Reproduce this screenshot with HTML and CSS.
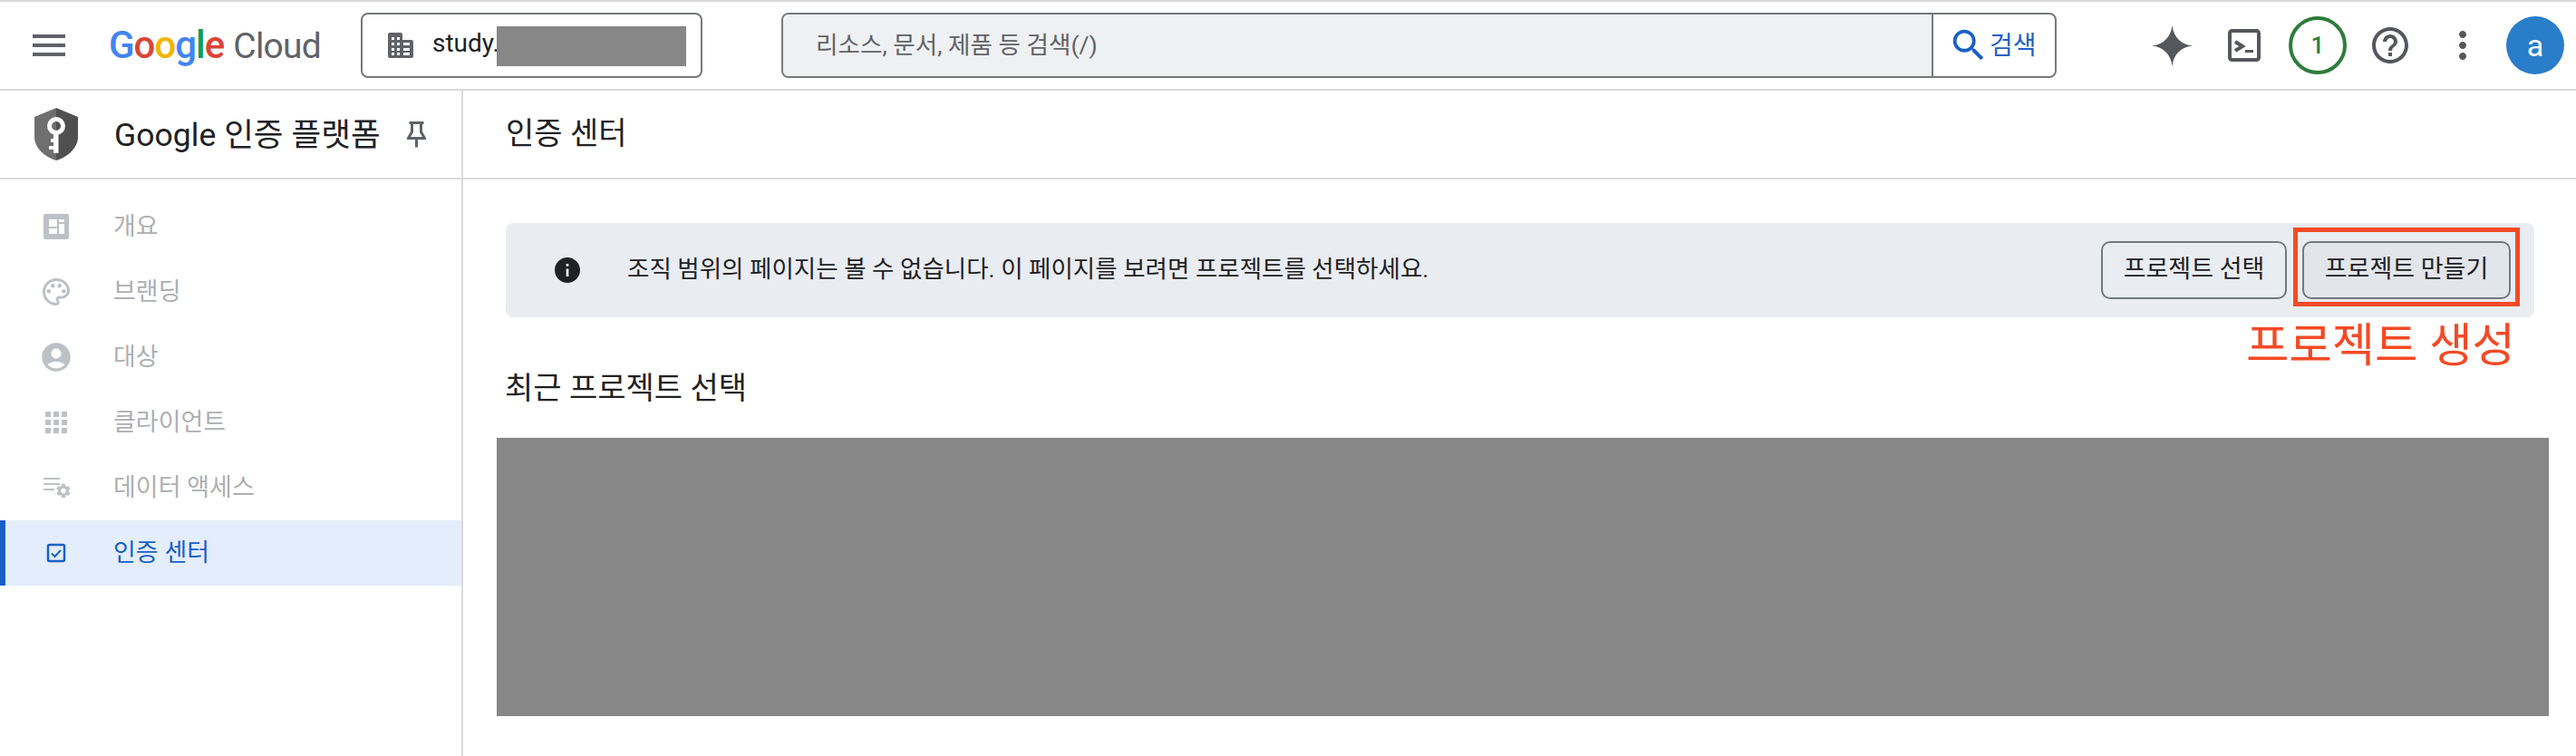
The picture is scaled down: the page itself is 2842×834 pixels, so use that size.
FILE: index.html
```html
<!DOCTYPE html>
<html lang="ko">
<head>
<meta charset="utf-8">
<title>Google 인증 플랫폼</title>
<link rel="stylesheet" href="styles.css">
</head>
<body>
<header class="topbar">
  <svg class="menu-icon" viewBox="0 0 24 24"><path d="M3 18h18v-2H3v2zm0-5h18v-2H3v2zm0-7v2h18V6H3z"/></svg>
  <div class="logo"><span class="g-blue">G</span><span class="g-red">o</span><span class="g-yellow">o</span><span class="g-blue">g</span><span class="g-green">l</span><span class="g-red">e</span><span class="logo-cloud">Cloud</span></div>
  <div class="project-picker">
    <svg class="building" viewBox="0 0 28 28"><path fill="#5f6368" d="M2 0h12a2 2 0 012 2v6h10a2 2 0 012 2v16a2 2 0 01-2 2H2a2 2 0 01-2-2V2a2 2 0 012-2z"/><path fill="#fff" d="M4 5h3v3H4zM10 5h3v3h-3zM4 11h3v3H4zM10 11h3v3h-3zM4 17h3v3H4zM10 17h3v3h-3zM4 22h3v3H4zM10 22h3v3h-3zM17 11h7v3h-7zM17 17h7v3h-7zM17 22h7v3h-7z"/></svg>
    <span class="lift">study.</span>
    <div class="redact-small"></div>
  </div>
  <div class="search">
    <div class="search-input"><span class="lift">리소스, 문서, 제품 등 검색(/)</span></div>
    <div class="search-btn">
      <svg viewBox="0 0 24 24"><path d="M15.500 14h-.79l-.28-.27C15.410 12.590 16 11.110 16 9.500 16 5.910 13.090 3 9.500 3S3 5.910 3 9.500 5.910 16 9.500 16c1.610 0 3.090-.59 4.230-1.570l.27.28v.79l5 4.990L20.490 19l-4.990-5zm-6 0C7.010 14 5 11.990 5 9.500S7.010 5 9.500 5 14 7.010 14 9.500 11.990 14 9.500 14z"/></svg>
      <span class="lift">검색</span>
    </div>
  </div>
  <div class="actions">
    <svg class="spark" viewBox="0 0 45 45"><path d="M22.500 0C24 13 32 21 45 22.500 32 24 24 32 22.500 45 21 32 13 24 0 22.500 13 21 21 13 22.500 0Z"/></svg>
    <svg class="terminal" viewBox="0 0 36 36"><rect x="2" y="2" width="32" height="32" rx="2.500" fill="none" stroke="#54575c" stroke-width="4"/><path d="M8 14l8 5-8 5" fill="none" stroke="#54575c" stroke-width="4"/><path fill="#54575c" d="M19 23h9v3h-9z"/></svg>
    <div class="badge">1</div>
    <svg class="help" viewBox="0 0 24 24"><path d="M11 18h2v-2h-2v2zm1-16C6.480 2 2 6.480 2 12s4.480 10 10 10 10-4.480 10-10S17.520 2 12 2zm0 18c-4.410 0-8-3.590-8-8s3.590-8 8-8 8 3.590 8 8-3.590 8-8 8zm0-14c-2.210 0-4 1.790-4 4h2c0-1.100.9-2 2-2s2 .9 2 2c0 2-3 1.750-3 5h2c0-2.250 3-2.500 3-5 0-2.210-1.790-4-4-4z"/></svg>
    <svg class="more" viewBox="0 0 24 24"><path d="M12 8c1.100 0 2-.9 2-2s-.9-2-2-2-2 .9-2 2 .9 2 2 2zm0 2c-1.100 0-2 .9-2 2s.9 2 2 2 2-.9 2-2-.9-2-2-2zm0 6c-1.100 0-2 .9-2 2s.9 2 2 2 2-.9 2-2-.9-2-2-2z"/></svg>
    <div class="avatar">a</div>
  </div>
</header>
<div class="shell">
  <aside class="sidebar">
    <div class="product">
      <svg class="shield" viewBox="0 0 48 58">
        <path fill="#6f6f6f" d="M24 0L0 10v22c0 12 11 22 24 26z"/>
        <path fill="#505050" d="M24 0l24 10v22c0 12-11 22-24 26z"/>
        <circle cx="24" cy="20" r="7.500" fill="none" stroke="#fff" stroke-width="5"/>
        <path fill="#fff" d="M21 27h5.500v23H21v-4h-5v-4h5v-4h-3v-4h3z"/>
      </svg>
      <span class="product-name lift">Google 인증 플랫폼</span>
      <svg class="pin" viewBox="0 0 21 29"><path d="M2.500 1.500h16M5.500 1.500v10L1.500 18.500h18l-4-7v-10M10.500 18.500v10" fill="none" stroke="#5f6368" stroke-width="3"/></svg>
    </div>
    <nav class="nav">
      <div class="nav-item">
        <svg class="nav-icon" viewBox="-4 -4 36 36"><rect width="28" height="28" rx="2" fill="#bdc1c6"/><path fill="#fff" d="M6 6h9v8H6zM17 6h6v3h-6zM17 11h6v11h-6zM6 16h9v6H6z"/></svg>
        <span class="lift">개요</span>
      </div>
      <div class="nav-item">
        <svg class="nav-icon" viewBox="0 0 24 24"><path d="M12 22C6.490 22 2 17.510 2 12S6.490 2 12 2s10 4.040 10 9c0 3.310-2.690 6-6 6h-1.770c-.28 0-.5.22-.5.5 0 .12.05.23.13.33.41.47.64 1.060.64 1.670 0 1.380-1.120 2.500-2.500 2.500zm0-18c-4.410 0-8 3.590-8 8s3.590 8 8 8c.28 0 .5-.22.5-.5 0-.16-.08-.28-.14-.35-.41-.46-.63-1.050-.63-1.650 0-1.380 1.120-2.500 2.500-2.500H16c2.210 0 4-1.790 4-4 0-3.860-3.590-7-8-7z"/><circle cx="6.500" cy="11.500" r="1.500"/><circle cx="9.500" cy="7.500" r="1.500"/><circle cx="14.500" cy="7.500" r="1.500"/><circle cx="17.500" cy="11.500" r="1.500"/></svg>
        <span class="lift">브랜딩</span>
      </div>
      <div class="nav-item">
        <svg class="nav-icon" viewBox="0.570 0.570 22.860 22.860"><path d="M12 2C6.480 2 2 6.480 2 12s4.480 10 10 10 10-4.480 10-10S17.520 2 12 2zm0 4c1.930 0 3.500 1.570 3.500 3.500S13.930 13 12 13s-3.500-1.570-3.500-3.500S10.070 6 12 6zm0 14c-2.030 0-4.430-.82-6.140-2.880C7.550 15.800 9.680 15 12 15s4.450.8 6.140 2.120C16.430 19.180 14.030 20 12 20z"/></svg>
        <span class="lift">대상</span>
      </div>
      <div class="nav-item">
        <svg class="nav-icon" viewBox="0 0 24 24"><path d="M4 8h4V4H4v4zm6 12h4v-4h-4v4zm-6 0h4v-4H4v4zm0-6h4v-4H4v4zm6 0h4v-4h-4v4zm6-10v4h4V4h-4zm-6 4h4V4h-4v4zm6 6h4v-4h-4v4zm0 6h4v-4h-4v4z"/></svg>
        <span class="lift">클라이언트</span>
      </div>
      <div class="nav-item">
        <svg class="nav-icon" viewBox="0 0 36 36"><path d="M4 7h18v2H4zM4 13h18v2H4zM4 19h12v2H4z"/><path transform="translate(16.400 11.900) scale(.8)" d="M19.140 12.940c.04-.3.06-.61.06-.94 0-.32-.02-.64-.07-.94l2.030-1.580c.18-.14.23-.41.12-.61l-1.920-3.320c-.12-.22-.37-.29-.59-.22l-2.390.96c-.5-.38-1.030-.7-1.620-.94l-.36-2.540c-.04-.24-.24-.41-.48-.41h-3.840c-.24 0-.43.17-.47.41l-.36 2.540c-.59.24-1.130.57-1.620.94l-2.390-.96c-.22-.08-.47 0-.59.22L2.740 8.870c-.12.21-.08.47.12.61l2.030 1.580c-.05.3-.09.63-.09.94s.02.64.07.94l-2.030 1.580c-.18.14-.23.41-.12.61l1.920 3.320c.12.22.37.29.59.22l2.390-.96c.5.38 1.030.7 1.620.94l.36 2.540c.05.24.24.41.48.41h3.840c.24 0 .44-.17.47-.41l.36-2.540c.59-.24 1.130-.56 1.620-.94l2.390.96c.22.08.47 0 .59-.22l1.920-3.320c.12-.22.07-.47-.12-.61l-2.010-1.580zM12 15.600c-1.980 0-3.600-1.620-3.600-3.600s1.620-3.600 3.600-3.600 3.600 1.620 3.600 3.600-1.620 3.600-3.600 3.600z"/></svg>
        <span class="lift">데이터 액세스</span>
      </div>
      <div class="nav-item active">
        <svg class="nav-icon" viewBox="0 0 36 36"><rect x="9" y="9" width="18" height="18" rx="1.500" fill="none" stroke="#1a5fc7" stroke-width="2.500"/><path d="M13 18.500l3.500 3.500 6.500-7" fill="none" stroke="#1a5fc7" stroke-width="2"/></svg>
        <span class="lift">인증 센터</span>
      </div>
    </nav>
  </aside>
  <main class="main">
    <div class="page-title"><span class="lift-more">인증 센터</span></div>
    <div class="content">
      <div class="banner">
        <svg class="info" viewBox="2 2 20 20"><path d="M12 2C6.480 2 2 6.480 2 12s4.480 10 10 10 10-4.480 10-10S17.520 2 12 2zm1 15h-2v-6h2v6zm0-8h-2V7h2v2z"/></svg>
        <span class="banner-text lift-more">조직 범위의 페이지는 볼 수 없습니다. 이 페이지를 보려면 프로젝트를 선택하세요.</span>
        <button class="btn"><span class="lift-more">프로젝트 선택</span></button>
        <button class="btn btn-create"><span class="lift-more">프로젝트 만들기</span></button>
        <div class="callout-box"></div>
        <div class="callout-label">프로젝트 생성</div>
      </div>
      <h2 class="recent">최근 프로젝트 선택</h2>
      <div class="redact-large"></div>
    </div>
  </main>
</div>
</body>
</html>
```
FILE: styles.css
```css
* { box-sizing: border-box; }
html, body { margin: 0; height: 834px; overflow: hidden; }
body {
  background: #fff;
  border-top: 2px solid #d9d9de;
  font-family: Roboto, "Noto Sans CJK KR", sans-serif;
  color: #202124;
  display: flex;
  flex-direction: column;
}
svg { display: block; flex: none; }
.lift { display: block; padding-bottom: 5px; }
.lift-more { display: block; padding-bottom: 8px; }

.topbar {
  height: 98px;
  flex: none;
  display: flex;
  align-items: center;
  border-bottom: 2px solid #d9d9de;
  padding-left: 30px;
}
.menu-icon { width: 48px; height: 48px; fill: #5f6368; }
.logo {
  margin-left: 42px;
  width: 278px;
  font-family: Roboto, sans-serif;
  font-size: 42px;
  font-weight: 500;
  letter-spacing: -1px;
  line-height: 48px;
  white-space: nowrap;
}
.g-blue { color: #4285f4; }
.g-red { color: #db4437; }
.g-yellow { color: #f4b400; }
.g-green { color: #0f9d58; }
.logo-cloud { color: #5f6368; margin-left: 10px; font-size: 39px; font-weight: 400; letter-spacing: -.8px; }

.project-picker {
  position: relative;
  width: 377px;
  height: 72px;
  border: 2px solid #75787c;
  border-radius: 8px;
  display: flex;
  align-items: center;
  padding-left: 28px;
  font-size: 28px;
  gap: 21px;
}
.building { width: 28px; height: 28px; }
.redact-small {
  position: absolute;
  left: 148px;
  top: 13px;
  width: 209px;
  height: 44px;
  background: #878787;
}

.search {
  margin-left: 87px;
  width: 1407px;
  height: 72px;
  border: 2px solid #75787c;
  border-radius: 8px;
  display: flex;
  overflow: hidden;
}
.search-input {
  flex: 1;
  background: #eff0f2;
  border-right: 2px solid #75787c;
  display: flex;
  align-items: center;
  padding-left: 36px;
  font-size: 26.600px;
  color: #5f6368;
}
.search-btn {
  width: 134px;
  display: flex;
  align-items: center;
  padding-left: 16px;
  color: #1a5fc7;
  font-size: 28px;
}
.search-btn svg { width: 46px; height: 46px; fill: #1a5fc7; }

.actions {
  flex: 1;
  display: flex;
  align-items: center;
  padding-left: 105px;
}
.spark { width: 45px; height: 45px; fill: #54575c; }
.terminal { width: 36px; height: 36px; margin-left: 39px; }
.badge {
  width: 64px;
  height: 64px;
  margin-left: 31px;
  border: 4px solid #2e7d3b;
  border-radius: 50%;
  color: #2e7d3b;
  font-size: 26px;
  font-weight: 500;
  display: flex;
  align-items: center;
  justify-content: center;
}
.help { width: 48px; height: 48px; margin-left: 24px; fill: #54575c; }
.more { width: 48px; height: 48px; margin-left: 32px; fill: #54575c; }
.avatar {
  width: 64px;
  height: 64px;
  margin-left: 24px;
  border-radius: 50%;
  background: #2a7dc8;
  color: #fff;
  font-size: 34px;
  display: flex;
  align-items: center;
  justify-content: center;
}

.shell { flex: 1; display: flex; min-height: 0; }
.sidebar {
  width: 511px;
  flex: none;
  border-right: 2px solid #d9d9de;
}
.product {
  height: 98px;
  display: flex;
  align-items: center;
  border-bottom: 2px solid #d9d9de;
  padding-left: 38px;
}
.shield { width: 48px; height: 58px; }
.product-name { margin-left: 40px; font-size: 35.600px; width: 323px; white-space: nowrap; }
.pin { width: 21px; height: 29px; }

.nav { padding-top: 16px; }
.nav-item {
  height: 72px;
  display: flex;
  align-items: center;
  padding-left: 44px;
  font-size: 27px;
  color: #adafb2;
}
.nav-icon { width: 36px; height: 36px; fill: #bdc1c6; margin-right: 45px; }
.nav-item.active {
  background: #e3edfb;
  border-left: 6px solid #1a5fc7;
  padding-left: 38px;
  color: #1a5fc7;
}

.main { flex: 1; min-width: 0; display: flex; flex-direction: column; }
.page-title {
  height: 98px;
  flex: none;
  display: flex;
  align-items: center;
  padding-left: 47px;
  font-size: 34px;
  border-bottom: 2px solid #d9d9de;
}
.content { padding: 48px 30px 0 37px; }
.banner {
  position: relative;
  height: 104px;
  margin: 0 16px 0 10px;
  background: #e9ecf1;
  border-radius: 8px;
  display: flex;
  align-items: center;
  padding: 0 26px 0 54px;
}
.info { width: 28px; height: 28px; fill: #202124; }
.banner-text { margin-left: 52px; flex: 1; font-size: 26.500px; }
.btn {
  width: 205px;
  height: 64px;
  padding: 0;
  border: 2px solid #727980;
  border-radius: 10px;
  background: transparent;
  font: 400 27px Roboto, "Noto Sans CJK KR", sans-serif;
  color: #202124;
}
.btn-create { width: 230px; margin-left: 17px; background: #e2e5ea; }
.callout-box {
  position: absolute;
  right: 16px;
  top: 5px;
  width: 250px;
  height: 87px;
  border: 5px solid #f44a25;
}
.callout-label {
  position: absolute;
  right: 21px;
  top: 104px;
  font-size: 51.500px;
  line-height: 64px;
  color: #f44a25;
  white-space: nowrap;
}
.recent {
  margin: 50px 0 0 9px;
  font-size: 34px;
  font-weight: 400;
  line-height: 56px;
}
.redact-large {
  margin-top: 27px;
  height: 307px;
  background: #878787;
}
```
